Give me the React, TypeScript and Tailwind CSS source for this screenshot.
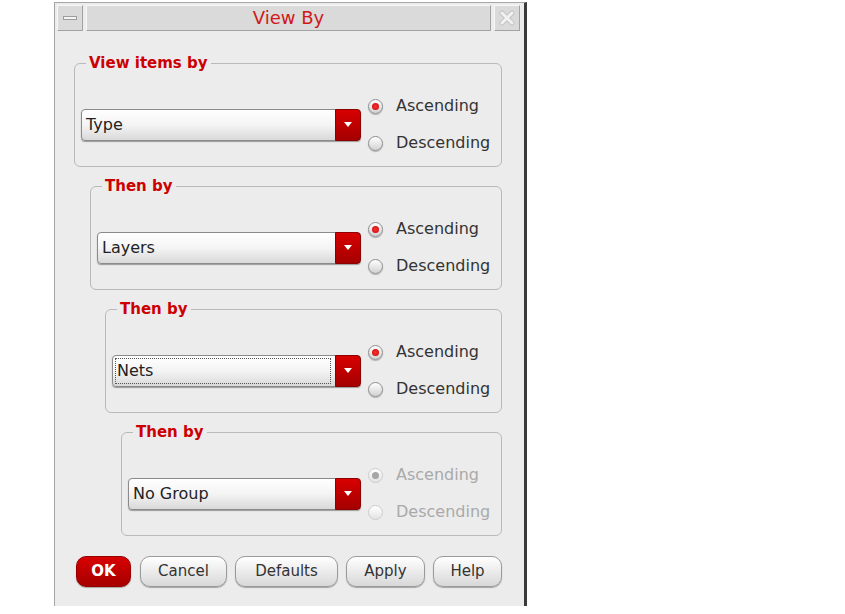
import React from 'react';

interface RadioProps {
  label: string;
  checked?: boolean;
  disabled?: boolean;
}

function Radio({ label, checked, disabled }: RadioProps) {
  return (
    <div className="flex h-[24px] items-center">
      <div
        className={
          disabled
            ? 'flex h-[15px] w-[15px] flex-none items-center justify-center rounded-full border border-[#cdcdcd] bg-linear-to-b from-white to-[#e4e4e4]'
            : 'flex h-[15px] w-[15px] flex-none items-center justify-center rounded-full border border-[#8e8e8e] bg-linear-to-b from-white to-[#d2d2d2] shadow-[0_1px_1px_rgba(0,0,0,0.25)]'
        }
      >
        {checked && (
          <div
            className={
              disabled
                ? 'h-[7px] w-[7px] rounded-full bg-[#a6a6a6]'
                : 'h-[7px] w-[7px] rounded-full bg-radial from-[#ff3030] to-[#c40000]'
            }
          />
        )}
      </div>
      <span className={disabled ? 'ml-[13px] text-[16px] leading-none text-[#a9a9a9]' : 'ml-[13px] text-[16px] leading-none text-[#333333]'}>
        {label}
      </span>
    </div>
  );
}

interface DropdownProps {
  value: string;
  focused?: boolean;
}

function Dropdown({ value, focused }: DropdownProps) {
  return (
    <div className="flex h-[32px] flex-1 rounded-[4px] border border-[#8a8a8a] bg-linear-to-b from-white via-[#f4f4f4] to-[#d9d9d9] shadow-[0_1px_1px_rgba(0,0,0,0.35)]">
      <div className="flex flex-1 items-center p-[2px]">
        <div
          className={
            focused
              ? 'mr-[2px] flex h-full flex-1 items-center border border-dotted border-[#555555] pl-px text-[16px] text-[#222222]'
              : 'flex h-full flex-1 items-center pl-[2px] text-[16px] text-[#222222]'
          }
        >
          {value}
        </div>
      </div>
      <div className="-my-px -mr-px flex w-[26px] items-center justify-center rounded-r-[4px] border border-[#8e0000] bg-linear-to-b from-[#d80000] to-[#a40000]">
        <div className="h-0 w-0 border-x-[4px] border-t-[5px] border-x-transparent border-t-white" />
      </div>
    </div>
  );
}

interface GroupProps {
  legend: string;
  value: string;
  indent: string;
  focused?: boolean;
  disabled?: boolean;
}

function SortGroup({ legend, value, indent, focused, disabled }: GroupProps) {
  return (
    <fieldset className={`${indent} mr-[22px] rounded-[6px] border border-[#b9b9b9] pl-[6px] pt-[22px] pb-[11px]`}>
      <legend className="ml-[5px] px-[3px] text-[15px] font-bold leading-[18px] text-[#cc0000]">{legend}</legend>
      <div className="flex items-center">
        <Dropdown value={value} focused={focused} />
        <div className="ml-[7px] flex w-[133px] flex-none flex-col gap-[13px]">
          <Radio label="Ascending" checked disabled={disabled} />
          <Radio label="Descending" disabled={disabled} />
        </div>
      </div>
    </fieldset>
  );
}

const groups: GroupProps[] = [
  { legend: 'View items by', value: 'Type', indent: 'ml-[19px] mt-[23px]' },
  { legend: 'Then by', value: 'Layers', indent: 'ml-[35px] mt-[10px]' },
  { legend: 'Then by', value: 'Nets', indent: 'ml-[50px] mt-[10px]', focused: true },
  { legend: 'Then by', value: 'No Group', indent: 'ml-[66px] mt-[10px]', disabled: true },
];

const buttons = [
  { label: 'Cancel', cls: 'ml-[9px] w-[87px]' },
  { label: 'Defaults', cls: 'ml-[8px] w-[103px]' },
  { label: 'Apply', cls: 'ml-[8px] w-[79px]' },
  { label: 'Help', cls: 'ml-[8px] w-[69px]' },
];

export default function App() {
  return (
    <div className="min-h-screen bg-white font-['DejaVu_Sans','Liberation_Sans',sans-serif]">
      <div className="ml-[54px] mt-[2px] flex h-[604px] w-[473px] flex-col border-t border-l border-[#a6a6a6] border-r-[3px] border-r-[#3a3a3a] bg-[#ececec]">
        {/* title bar */}
        <div className="flex pl-[2px] pr-[4px] pt-[2px]">
          <div className="flex h-[26px] w-[26px] items-center justify-center border border-t-[#f8f8f8] border-l-[#f8f8f8] border-r-[#a2a2a2] border-b-[#a2a2a2] bg-[#dadada]">
            <div className="h-[4px] w-[14px] border border-[#9c9c9c] bg-[#f4f4f4]" />
          </div>
          <div className="ml-[3px] flex h-[26px] flex-1 items-center justify-center border border-t-[#f8f8f8] border-l-[#f8f8f8] border-r-[#a2a2a2] border-b-[#a2a2a2] bg-[#dadada] pb-[2px] text-[18px] text-[#d01818]">
            View By
          </div>
          <div className="ml-[3px] flex h-[26px] w-[26px] items-center justify-center border border-t-[#f8f8f8] border-l-[#f8f8f8] border-r-[#a2a2a2] border-b-[#a2a2a2] bg-[#dadada]">
            <svg width="16" height="16" viewBox="0 0 16 16">
              <path d="M3 3 L13 13 M13 3 L3 13" stroke="#c4c4c4" strokeWidth="5" strokeLinecap="round" fill="none" />
              <path d="M3 3 L13 13 M13 3 L3 13" stroke="#f2f2f2" strokeWidth="3" strokeLinecap="round" fill="none" />
            </svg>
          </div>
        </div>

        {groups.map((g, i) => (
          <SortGroup key={i} {...g} />
        ))}

        <div className="ml-[21px] mt-[20px] flex">
          <button className="h-[31px] w-[55px] rounded-[10px] border border-[#980000] bg-linear-to-b from-[#d80000] to-[#a60000] text-[15px] font-bold text-white shadow-[0_1px_1px_rgba(0,0,0,0.3)]">
            OK
          </button>
          {buttons.map((b) => (
            <button
              key={b.label}
              className={`${b.cls} h-[31px] rounded-[10px] border border-[#9a9a9a] bg-linear-to-b from-white to-[#d8d8d8] text-[15px] text-[#333333] shadow-[0_1px_1px_rgba(0,0,0,0.3)]`}
            >
              {b.label}
            </button>
          ))}
        </div>
      </div>
    </div>
  );
}
